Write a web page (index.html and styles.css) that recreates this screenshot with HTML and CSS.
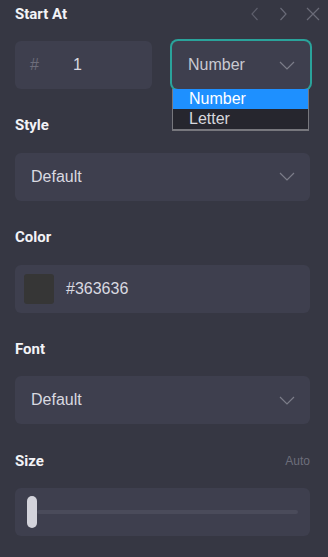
FILE: index.html
```html
<!DOCTYPE html>
<html>
<head>
    <link rel="stylesheet" href="styles.css">
</head>
<body>
   <div class="panel">
    <div class="section">
        <div class="head">
            <span class="label">Start At</span>
            <div class="nav">
                <svg width="10" height="14" viewBox="0 0 10 14"><path d="M7.5 1 L2 7 L7.5 13" fill="none" stroke="#5d5e6b" stroke-width="1.2"/></svg>
                <svg width="10" height="14" viewBox="0 0 10 14"><path d="M2.5 1 L8 7 L2.5 13" fill="none" stroke="#6a6b78" stroke-width="1.2"/></svg>
                <svg width="14" height="14" viewBox="0 0 14 14"><path d="M1 1 L13 13 M13 1 L1 13" fill="none" stroke="#6a6b78" stroke-width="1.2"/></svg>
            </div>
        </div>
        <div class="pair">
            <div class="box number">
                <span class="hash">#</span>
                <span class="value">1</span>
            </div>
            <div class="select-wrap">
                <div class="box select active">
                    <span class="value dim">Number</span>
                    <svg class="chev" width="16" height="9" viewBox="0 0 16 9"><path d="M1 1 L8 8 L15 1" fill="none" stroke="#7c7d89" stroke-width="1.2"/></svg>
                </div>
                <!-- open list of the select -->
                <ul class="options">
                    <li class="picked">Number</li>
                    <li>Letter</li>
                </ul>
            </div>
        </div>
    </div>

    <div class="section">
        <div class="head"><span class="label">Style</span></div>
        <div class="box select">
            <span class="value">Default</span>
            <svg class="chev" width="16" height="9" viewBox="0 0 16 9"><path d="M1 1 L8 8 L15 1" fill="none" stroke="#7c7d89" stroke-width="1.2"/></svg>
        </div>
    </div>

    <div class="section">
        <div class="head"><span class="label">Color</span></div>
        <div class="box color">
            <span class="swatch" style="background-color: #363636;"></span>
            <span class="value">#363636</span>
        </div>
    </div>

    <div class="section">
        <div class="head"><span class="label">Font</span></div>
        <div class="box select">
            <span class="value">Default</span>
            <svg class="chev" width="16" height="9" viewBox="0 0 16 9"><path d="M1 1 L8 8 L15 1" fill="none" stroke="#7c7d89" stroke-width="1.2"/></svg>
        </div>
    </div>

    <div class="section">
        <div class="head">
            <span class="label">Size</span>
            <span class="hint">Auto</span>
        </div>
        <div class="box slider">
            <span class="thumb"></span>
            <span class="track"></span>
        </div>
    </div>
   </div>
</body>
</html>
```

FILE: styles.css
```css
/* Side panel */
body {
    margin: 0;
    background-color: #363743;
    font-family: "Liberation Sans", Arial, sans-serif;
}

.panel {
    padding: 0 18px 0 15px;
}

.section {
    margin-bottom: 22.75px;
}

.head {
    display: flex;
    align-items: center;
    justify-content: space-between;
    height: 27px;
    margin-bottom: 14px;
}

.label {
    font-family: Roboto, sans-serif;
    font-weight: bold;
    font-size: 15px;
    color: #f3f3f7;
}

.hint {
    font-size: 12px;
    color: #6d6e7b;
}

.nav {
    display: flex;
    align-items: center;
    gap: 18px;
    margin-right: -10px;
}

.box {
    display: flex;
    align-items: center;
    height: 48px;
    background-color: #3e3f4e;
    border-radius: 6px;
    box-sizing: border-box;
}

.value {
    font-size: 16px;
    color: #d9d9e0;
}

.value.dim {
    color: #c9c9d1;
}

.pair {
    display: grid;
    grid-template-columns: 137px 138px;
    gap: 20px;
}

.number {
    padding-left: 15px;
}

.hash {
    font-size: 16px;
    color: #6d6e7b;
    width: 43px;
}

.select {
    justify-content: space-between;
    padding: 0 15px 0 16px;
}

.select.active {
    box-shadow: 0 0 0 2px #2aa39b;
    padding-left: 16px;
}

.select-wrap {
    position: relative;
}

.options {
    position: absolute;
    left: 0;
    top: 48px;
    width: 137px;
    margin: 0;
    padding: 0;
    list-style: none;
    border: 1px solid #77777d;
    border-top: none;
    border-bottom-width: 2px;
    box-sizing: border-box;
    background-color: #26262e;
}

.options li {
    height: 20px;
    line-height: 20px;
    padding-left: 16px;
    font-size: 16px;
    color: #d8d8dd;
}

.options li.picked {
    background-color: #1e90ff;
    color: #ffffff;
}

.color {
    padding-left: 9px;
}

.swatch {
    width: 30px;
    height: 30px;
    border-radius: 3px;
    margin-right: 12px;
}

.slider {
    padding: 0 12px;
}

.thumb {
    width: 10px;
    height: 32px;
    border-radius: 5px;
    background-color: #d3d3db;
}

.track {
    flex: 1;
    height: 4px;
    border-radius: 2px;
    background-color: #4a4b5a;
}
```
